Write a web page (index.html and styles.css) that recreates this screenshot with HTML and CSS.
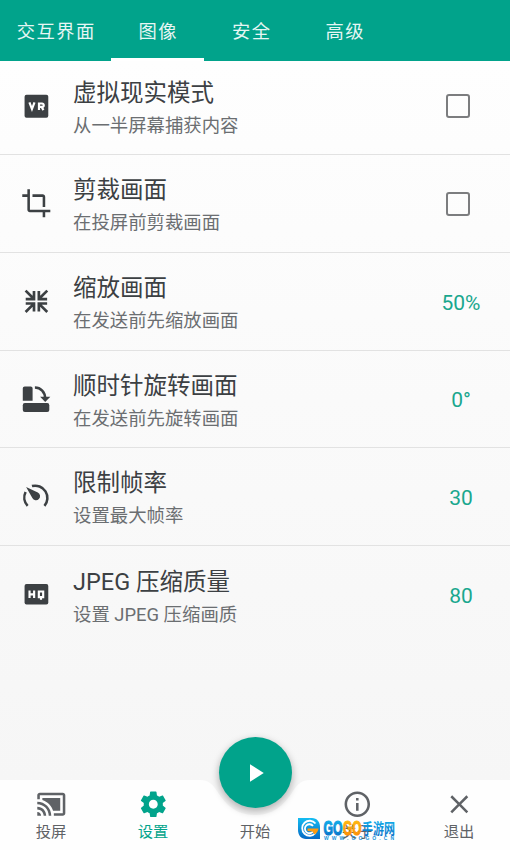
FILE: index.html
```html
<!DOCTYPE html>
<html lang="zh-CN">
  <head>
    <meta charset="UTF-8" />
    <meta name="viewport" content="width=device-width, initial-scale=1.0" />
    <title>设置</title>
    <link rel="stylesheet" href="styles.css">
  </head>
  <body>
    <div class="app">
      <header class="tabs">
        <a class="tab wide">交互界面</a>
        <a class="tab active">图像</a>
        <a class="tab">安全</a>
        <a class="tab">高级</a>
      </header>

      <main class="list">
        <div class="row">
          <svg class="icon" viewBox="0 0 24 24">
            <rect x="2.8" y="3" width="18.6" height="18" rx="1.5" />
            <path class="cut" d="M6.6 9l2 5.200L10.600 9M14.100 15V9.800h2.400a1.300 1.300 0 0 1 0 2.700h-2.400M16.200 12.500l1.400 2.500" />
          </svg>
          <div class="text">
            <div class="title">虚拟现实模式</div>
            <div class="desc">从一半屏幕捕获内容</div>
          </div>
          <div class="value"><span class="checkbox"></span></div>
        </div>

        <div class="row">
          <svg class="icon" viewBox="0 0 24 24">
            <path d="M17 15h2V7c0-1.100-.900-2-2-2H9v2h8v8zM7 17V1H5v4H1v2h4v10c0 1.100.900 2 2 2h10v4h2v-4h4v-2H7z" />
          </svg>
          <div class="text">
            <div class="title">剪裁画面</div>
            <div class="desc">在投屏前剪裁画面</div>
          </div>
          <div class="value"><span class="checkbox"></span></div>
        </div>

        <div class="row">
          <svg class="icon" viewBox="0 0 24 24">
            <path class="line" d="M3.600 3.600l6.200 6.200M10.200 4v6.300H3.700M20.600 3.600l-6.200 6.200M14 4v6.300h6.500M3.600 20.400l6.200-6.200M10.200 20v-6.300H3.700M20.600 20.400l-6.200-6.200M14 20v-6.300h6.500" />
          </svg>
          <div class="text">
            <div class="title">缩放画面</div>
            <div class="desc">在发送前先缩放画面</div>
          </div>
          <div class="value">50%</div>
        </div>

        <div class="row">
          <svg class="icon" viewBox="0 0 24 24">
            <path d="M2.900 1.900h4.700a1.500 1.500 0 0 1 1.500 1.500v9.800H1.400V3.400A1.500 1.500 0 0 1 2.900 1.900z" />
            <rect x="1.400" y="15" width="20.800" height="7" rx="1.600" />
            <path d="M15 10h8l-4 4.200z" />
            <path class="arc" d="M10.900 2.800c4.600 0 8 3.500 8 8.400" />
          </svg>
          <div class="text">
            <div class="title">顺时针旋转画面</div>
            <div class="desc">在发送前先旋转画面</div>
          </div>
          <div class="value">0°</div>
        </div>

        <div class="row">
          <svg class="icon" viewBox="0 0 24 24">
            <path class="arc" d="M5.200 19.500A9.600 9.600 0 0 1 3.600 8.600M8.600 4a9.600 9.600 0 0 1 9.800 15.500" />
            <path d="M4 4.700l9.200 4.300a3.200 3.200 0 1 1-4.300 4.300z" />
          </svg>
          <div class="text">
            <div class="title">限制帧率</div>
            <div class="desc">设置最大帧率</div>
          </div>
          <div class="value">30</div>
        </div>

        <div class="row">
          <svg class="icon" viewBox="0 0 24 24">
            <rect x="2.800" y="4" width="18.600" height="16" rx="1.500" />
            <path class="cut" d="M6.700 9v6M10.300 9v6M6.700 12H10.300M14 9.800h3.400v4.400H14zM15.700 14v2.200" />
          </svg>
          <div class="text">
            <div class="title">JPEG 压缩质量</div>
            <div class="desc">设置 JPEG 压缩画质</div>
          </div>
          <div class="value">80</div>
        </div>
      </main>

      <footer class="nav">
        <svg class="nav-shape" viewBox="0 0 510 70">
          <path d="M0 0H200C209 0 212 4 217 11C227 27 238 35 255 35S283 27 293 11C298 4 301 0 310 0H510V70H0z" />
        </svg>
        <a class="nav-item">
          <svg class="icon" viewBox="0 0 24 24">
            <path d="M1 18v3h3c0-1.660-1.340-3-3-3zm0-4v2c2.760 0 5 2.240 5 5h2c0-3.870-3.130-7-7-7zm18-7H5v1.630c3.960 1.280 7.090 4.410 8.370 8.370H19V7zM1 10v2c4.970 0 9 4.030 9 9h2c0-6.080-4.930-11-11-11zm20-7H3c-1.100 0-2 .900-2 2v3h2V5h18v14h-7v2h7c1.100 0 2-.900 2-2V5c0-1.100-.900-2-2-2z" />
          </svg>
          <span>投屏</span>
        </a>
        <a class="nav-item current">
          <svg class="icon" viewBox="0 0 24 24">
            <path d="M19.430 12.980c.04-.32.070-.64.070-.98s-.03-.66-.07-.98l2.110-1.650c.19-.15.240-.42.120-.64l-2-3.460c-.12-.22-.39-.3-.61-.22l-2.490 1c-.52-.4-1.080-.73-1.690-.98l-.38-2.650C14.460 2.180 14.250 2 14 2h-4c-.25 0-.46.180-.49.420l-.38 2.650c-.61.250-1.170.590-1.690.98l-2.490-1c-.23-.09-.49 0-.61.220l-2 3.460c-.13.220-.07.490.120.640l2.110 1.650c-.04.320-.07.650-.07.980s.03.660.070.980l-2.110 1.650c-.19.150-.24.420-.12.640l2 3.460c.12.220.390.300.610.220l2.490-1c.52.400 1.080.730 1.690.98l.38 2.650c.03.240.240.420.490.420h4c.25 0 .46-.18.490-.42l.38-2.650c.61-.25 1.170-.59 1.690-.98l2.490 1c.23.090.490 0 .61-.22l2-3.460c.12-.22.070-.49-.12-.64l-2.110-1.650zM12 15.500c-1.930 0-3.500-1.570-3.500-3.500s1.570-3.500 3.500-3.500 3.500 1.570 3.500 3.500-1.570 3.500-3.500 3.500z" />
          </svg>
          <span>设置</span>
        </a>
        <a class="nav-item start">
          <span>开始</span>
        </a>
        <a class="nav-item">
          <svg class="icon" viewBox="0 0 24 24">
            <path d="M11 17h2v-6h-2v6zm1-15C6.480 2 2 6.480 2 12s4.480 10 10 10 10-4.480 10-10S17.520 2 12 2zm0 18c-4.410 0-8-3.590-8-8s3.590-8 8-8 8 3.590 8 8-3.590 8-8 8zM11 9h2V7h-2v2z" />
          </svg>
          <span>关于</span>
        </a>
        <a class="nav-item">
          <svg class="icon" viewBox="0 0 24 24">
            <path d="M19 6.410L17.590 5 12 10.590 6.410 5 5 6.410 10.590 12 5 17.590 6.410 19 12 13.410 17.590 19 19 17.590 13.410 12z" />
          </svg>
          <span>退出</span>
        </a>
        <button class="fab" aria-label="开始">
          <svg viewBox="0 0 24 24"><path d="M8 5v14l11-7z" /></svg>
        </button>

        <!-- site badge over the nav bar -->
        <svg class="badge" viewBox="0 0 100 26">
          <defs>
            <linearGradient id="blue" x1="0" y1="0" x2="0" y2="1">
              <stop offset="0" stop-color="#14bdf2" />
              <stop offset="1" stop-color="#0669c4" />
            </linearGradient>
            <linearGradient id="orange" x1="0" y1="0" x2="0" y2="1">
              <stop offset="0" stop-color="#ffc414" />
              <stop offset="1" stop-color="#fb8707" />
            </linearGradient>
          </defs>
          <path fill="url(#blue)" d="M1 2h14c5 0 8 4 8 9v12H9c-5 0-8-4-8-9z" />
          <path class="swirl" d="M18.500 7.500A7.500 7.500 0 1 0 18.500 17M16 10a4.500 4.500 0 1 0 0 5.500" />
          <path fill="#fd9b12" d="M10.500 12.500h11c-.500 3-2 5-4 6l-2-3-5-.500z" />
          <g class="badge-name">
            <text x="26.500" y="18.800" textLength="19" lengthAdjust="spacingAndGlyphs" fill="url(#blue)" stroke="url(#blue)">GO</text>
            <text x="46" y="18.800" textLength="18.500" lengthAdjust="spacingAndGlyphs" fill="url(#orange)" stroke="url(#orange)">GO</text>
          </g>
          <text class="badge-cn" x="65" y="17.800" textLength="33" lengthAdjust="spacingAndGlyphs" fill="url(#blue)">手游网</text>
          <text class="badge-url" x="27" y="24.300" textLength="70">WWW.GOGO.CN</text>
        </svg>
      </footer>
    </div>
  </body>
</html>
```
FILE: styles.css
```css
* {
  box-sizing: border-box;
}
body {
  margin: 0;
  font-family: Roboto, "Noto Sans CJK SC", sans-serif;
  color: #3c4043;
}
.app {
  display: flex;
  flex-direction: column;
  width: 510px;
  height: 850px;
  overflow: hidden;
  background: linear-gradient(#fefefe 60px, #fafafa 400px, #f6f6f6 780px);
}
.tabs {
  display: flex;
  flex: none;
  height: 61px;
  z-index: 1;
  background-color: #01a38b;
}
.tab {
  display: flex;
  align-items: center;
  justify-content: center;
  width: 93.5px;
  padding: 5px 0 0 2px;
  border-bottom: 3px solid transparent;
  font-size: 18.3px;
  letter-spacing: 1.5px;
  line-height: 53px;
  color: #e6f6f3;
}
.tab.wide {
  width: 110.5px;
}
.tab.active {
  border-color: #ffffff;
}
.list {
  flex: 1;
  margin-top: -3.5px;
}
.row {
  display: flex;
  align-items: center;
  height: 97.7px;
  padding-left: 21px;
  border-bottom: 1.5px solid #e2e2e2;
}
.row:last-child {
  border-bottom: none;
}
.icon {
  width: 30.6px;
  height: 30.6px;
  flex: none;
  fill: currentColor;
}
.cut {
  fill: none;
  stroke: #ffffff;
  stroke-width: 1.7;
}
.line {
  fill: none;
  stroke: currentColor;
  stroke-width: 2.1;
}
.arc {
  fill: none;
  stroke: currentColor;
  stroke-width: 2;
}
.text {
  flex: 1;
  padding: 2.5px 0 0 21.4px;
}
.title {
  font-size: 23.5px;
  line-height: 36px;
}
.desc {
  font-size: 18.4px;
  line-height: 29px;
  color: #6b6e71;
}
.value {
  display: flex;
  justify-content: center;
  padding-top: 3px;
  width: 98px;
  font-size: 21px;
  color: #1aa78e;
}
.checkbox {
  width: 24px;
  height: 24px;
  margin: -3px 6px 0 0;
  border: 2.5px solid #7c7d7f;
  border-radius: 3px;
}
.nav {
  position: relative;
  display: flex;
  flex: none;
  height: 70px;
}
.nav-shape {
  position: absolute;
  width: 510px;
  height: 70px;
  fill: #fefefe;
}
.nav-item {
  position: relative;
  display: flex;
  flex: 1;
  flex-direction: column;
  align-items: center;
  padding-top: 9px;
  font-size: 15.3px;
  line-height: 25px;
  color: #5f6266;
}
.nav-item.current {
  color: #01a38b;
}
.nav-item.start {
  padding-top: 39.6px;
}
.fab {
  position: absolute;
  left: 219px;
  top: -43px;
  display: flex;
  align-items: center;
  justify-content: center;
  width: 73px;
  height: 71px;
  padding: 0 2px 0 0;
  border: none;
  border-radius: 50%;
  background-color: #01a38b;
  box-shadow: 0 3px 7px 1px rgba(0, 0, 0, 0.25);
}
.fab svg {
  width: 30px;
  height: 30px;
  fill: #ffffff;
}
.badge {
  position: absolute;
  left: 297px;
  top: 35.5px;
  width: 100px;
  height: 26px;
}
.swirl {
  fill: none;
  stroke: #ffffff;
  stroke-width: 1.8;
}
.badge-name {
  font: bold 21px "Liberation Sans", sans-serif;
  stroke-width: 1.2;
}
.badge-cn {
  font: bold 14.5px "Noto Sans CJK SC", sans-serif;
}
.badge-url {
  font: bold 5px "Liberation Sans", sans-serif;
  fill: #1692db;
}
```
